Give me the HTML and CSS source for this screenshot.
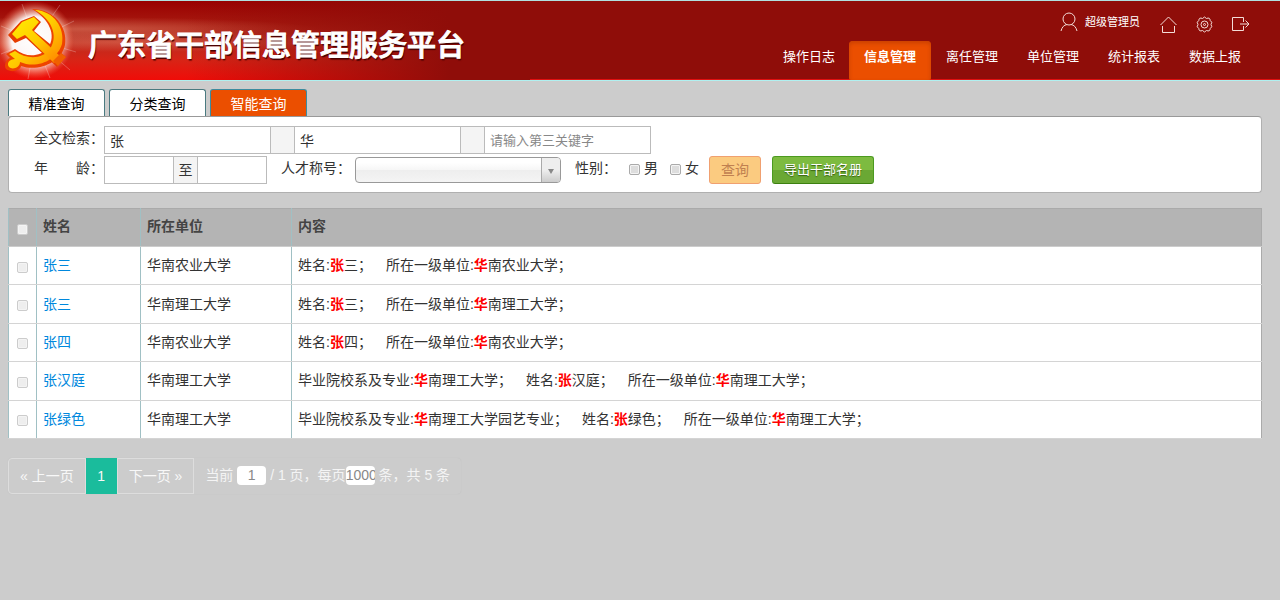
FILE: index.html
```html
<!DOCTYPE html>
<html lang="zh-CN">
<head>
  <meta charset="UTF-8">
  <title>广东省干部信息管理服务平台</title>
  <link rel="stylesheet" href="styles.css">
</head>

<body>
<header class="header">
  <div class="brand">
    <svg class="emblem" width="76" height="78" viewBox="0 0 76 78" aria-hidden="true">
      <defs>
        <radialGradient id="glow">
          <stop offset="0" stop-color="#fff"/>
          <stop offset="0.6" stop-color="#fff" stop-opacity="0.95"/>
          <stop offset="0.8" stop-color="#ffc0a8" stop-opacity="0.5"/>
          <stop offset="1" stop-color="#f64" stop-opacity="0"/>
        </radialGradient>
        <linearGradient id="gold" x1="0" y1="0" x2="1" y2="1">
          <stop offset="0" stop-color="#ffee00"/>
          <stop offset="0.5" stop-color="#ffcc00"/>
          <stop offset="1" stop-color="#ff8000"/>
        </linearGradient>
      </defs>
      <circle cx="35" cy="38" r="39" fill="url(#glow)"/>
      <g stroke="#fff" stroke-opacity="0.25">
        <path d="M35 38L60 3M35 38L74 19M35 38L76 50M35 38L28 77M35 38L50 76M35 38L1 24M35 38L1 52M35 38L22 2M35 38L70 68"/>
      </g>
      <path d="M32 7C54 7 68 25 65 43C61 61 38 70 21 64C20 69 11 71 6 67C3 63 7 57 10 56L6 52L15 47C26 56 40 55 48 46C57 33 49 17 32 7Z" fill="#ee4400"/>
      <path d="M8 33L21 19L34 14L41 20L34 29L66 55L57 65L26 36L15 41Z" fill="#e63c00"/>
      <path d="M35 8C54 9 65 26 62 42C57 59 36 67 20 60C20 66 12 68 9 65C6 61 10 57 15 57L9 52L15 49C27 58 43 57 50 47C59 33 51 17 35 8Z" fill="url(#gold)"/>
      <path d="M12 32L22 20L34 15L39 20L32 28L61 55L54 61L25 33L17 37Z" fill="url(#gold)"/>
      <path d="M53 59L61 51L66 55L58 64Z" fill="#f06000"/>
    </svg>
    <h1 class="title">广东省干部信息管理服务平台</h1>
  </div>
  <div class="header-right">
    <div class="user-bar">
      <svg width="18" height="20" viewBox="0 0 18 20" class="icon"><circle cx="9" cy="7" r="6"/><path d="M1 19C2 15 4 13 7 12.5M11 12.5C14 13 16 15 17 19"/></svg>
      <span class="user-name">超级管理员</span>
      <a href="#" aria-label="首页"><svg width="17" height="17" viewBox="0 0 17 17" class="icon"><path d="M.5 9L8.500 1L16.500 9M2.500 10V16.500H14.500V10"/></svg></a>
      <a href="#" aria-label="设置"><svg width="17" height="17" viewBox="0 0 17 17" class="icon"><path d="M6.500 2.500Q8.500-.5 10.500 2.500Q14 1 14.200 4.500Q17 6 15 8.500Q17 11 14.200 12.500Q14 16 10.500 14.500Q8.500 17.500 6.500 14.500Q3 16 2.800 12.500Q0 11 2 8.500Q0 6 2.800 4.500Q3 1 6.500 2.500Z"/><circle cx="8.500" cy="8.500" r="3.500"/><circle cx="8.500" cy="8.500" r="1"/></svg></a>
      <a href="#" aria-label="退出"><svg width="17" height="17" viewBox="0 0 17 17" class="icon"><path d="M11.500 6V1.500H.5V14.500H11.500V10M8 8H16.500M13.500 4.500L17 8L13.500 11.500"/></svg></a>
    </div>
    <nav class="nav">
      <a href="#">操作日志</a>
      <a href="#" class="active">信息管理</a>
      <a href="#">离任管理</a>
      <a href="#">单位管理</a>
      <a href="#">统计报表</a>
      <a href="#">数据上报</a>
    </nav>
  </div>
</header>

<main class="main">
  <div class="tabs">
    <button type="button">精准查询</button>
    <button type="button">分类查询</button>
    <button type="button" class="active">智能查询</button>
  </div>

  <form class="search">
    <div class="row">
      <label class="name" for="key1">全文检索：</label>
      <div class="group">
        <input type="text" id="key1" class="key" value="张">
        <span class="addon"></span>
        <input type="text" class="key" value="华" aria-label="第二关键字">
        <span class="addon"></span>
        <input type="text" class="key" placeholder="请输入第三关键字" aria-label="第三关键字">
      </div>
    </div>
    <div class="row">
      <label class="name" for="age1">年　　龄：</label>
      <div class="group">
        <input type="text" id="age1" class="age">
        <span class="addon">至</span>
        <input type="text" class="age" aria-label="最大年龄">
      </div>
      <label class="talent-name" for="talent">人才称号：</label>
      <div class="select">
        <select id="talent"><option></option></select>
      </div>
      <span class="sex-name">性别：</span>
      <label class="check"><input type="checkbox">男</label>
      <label class="check"><input type="checkbox">女</label>
      <button type="button" class="btn btn-query">查询</button>
      <button type="button" class="btn btn-export">导出干部名册</button>
    </div>
  </form>

  <table class="list">
    <thead>
      <tr><th class="col-check"><input type="checkbox" aria-label="全选"></th><th class="col-name">姓名</th><th class="col-unit">所在单位</th><th>内容</th></tr>
    </thead>
    <tbody>
      <tr><td class="col-check"><input type="checkbox" aria-label="选择"></td><td><a href="#">张三</a></td><td>华南农业大学</td><td>姓名:<b>张</b>三；　所在一级单位:<b>华</b>南农业大学；</td></tr>
      <tr><td class="col-check"><input type="checkbox" aria-label="选择"></td><td><a href="#">张三</a></td><td>华南理工大学</td><td>姓名:<b>张</b>三；　所在一级单位:<b>华</b>南理工大学；</td></tr>
      <tr><td class="col-check"><input type="checkbox" aria-label="选择"></td><td><a href="#">张四</a></td><td>华南农业大学</td><td>姓名:<b>张</b>四；　所在一级单位:<b>华</b>南农业大学；</td></tr>
      <tr><td class="col-check"><input type="checkbox" aria-label="选择"></td><td><a href="#">张汉庭</a></td><td>华南理工大学</td><td>毕业院校系及专业:<b>华</b>南理工大学；　姓名:<b>张</b>汉庭；　所在一级单位:<b>华</b>南理工大学；</td></tr>
      <tr><td class="col-check"><input type="checkbox" aria-label="选择"></td><td><a href="#">张绿色</a></td><td>华南理工大学</td><td>毕业院校系及专业:<b>华</b>南理工大学园艺专业；　姓名:<b>张</b>绿色；　所在一级单位:<b>华</b>南理工大学；</td></tr>
    </tbody>
  </table>

  <div class="pager">
    <a href="#" class="prev">« 上一页</a>
    <a href="#" class="current">1</a>
    <a href="#" class="next">下一页 »</a>
    <div class="info">当前 <input type="text" value="1" aria-label="当前页"> / 1 页，每页<input type="text" value="1000" aria-label="每页条数"> 条，共 5 条</div>
  </div>
</main>
</body>
</html>
```
FILE: styles.css
```css
* {
  box-sizing: border-box;
}

body {
  margin: 0;
  background: #ccc;
  color: #333;
  font: 14px/20px "Liberation Sans", "Noto Sans CJK SC", sans-serif;
  text-spacing-trim: space-all;
}

input, select, button {
  font: inherit;
  color: inherit;
}

a {
  text-decoration: none;
}

/* header */
.header {
  display: flex;
  justify-content: space-between;
  height: 81px;
  border-top: 1px solid #b0e0e0;
  border-bottom: 1px solid #b0f0f0;
  background: #8f0d09;
  box-shadow: inset 0 -1px #e01010;
}

.brand {
  display: flex;
  align-items: center;
  width: 530px;
  background:
    linear-gradient(90deg, transparent 0, transparent 35%, #8f0d09 85%),
    radial-gradient(ellipse 240px 12px at 80px 28px, rgba(230, 140, 110, 0.5), transparent),
    radial-gradient(ellipse 260px 10px at 130px 41px, rgba(240, 140, 110, 0.4), transparent),
    linear-gradient(#900 0, #a81a10 30%, #b82c20 50%, #d82416 75%, #f00c08 100%);
}

.emblem {
  flex: none;
}

.title {
  margin: 0 0 0 12px;
  padding-top: 10px;
  color: #fff;
  font-size: 29px;
  font-weight: 500;
  line-height: 40px;
  white-space: nowrap;
  text-shadow: 1px 2px 1px #400;
  -webkit-text-stroke: 1px #fff;
}

.header-right {
  display: flex;
  flex-direction: column;
  justify-content: space-between;
  align-items: flex-end;
}

.user-bar {
  display: flex;
  align-items: center;
  height: 39px;
  padding: 3px 31px 0 0;
}

.user-bar a {
  height: 17px;
  margin: 4px 0 0 19px;
}

.user-name {
  margin: 0 1px 0 7px;
  color: #fff;
  font-size: 11px;
}

.icon {
  display: block;
  fill: none;
  stroke: #f4dcd8;
}

.nav {
  display: flex;
  padding-right: 25px;
}

.nav a {
  height: 39px;
  padding: 0 14px 0 15px;
  color: #fff;
  font-size: 13px;
  line-height: 32px;
}

.nav .active {
  padding: 0 15px;
  border-radius: 4px 4px 2px 2px;
  background: #eb4f00;
  box-shadow: inset 0 2px 4px #c84000;
  font-weight: bold;
}

/* tabs and search form */
.main {
  padding: 8px 18px 20px 8px;
}

.tabs {
  display: flex;
  gap: 4px;
}

.tabs button {
  width: 97px;
  height: 27px;
  padding: 2px 0 0;
  border: 1px solid #4a7a80;
  border-bottom: 0;
  border-radius: 3px 3px 0 0;
  background: #fff;
  color: #000;
}

.tabs .active {
  border-color: #3c8ca0;
  background: #eb4f00;
  color: #fff;
}

.search {
  padding: 9px 0 8px 25px;
  border: 1px solid #b0b0b0;
  border-top-color: #999;
  border-radius: 4px;
  background: #fff;
}

.row {
  display: flex;
  align-items: center;
  height: 28px;
}

.row + .row {
  margin-top: 2px;
}

.name {
  width: 70px;
  padding-bottom: 4px;
}

.group {
  display: flex;
  border: 1px solid #bbb;
}

.group input {
  height: 26px;
  padding: 0 5px;
  border: 0;
  background: #fff;
}

.group .key {
  width: 165px;
}

.group .age {
  width: 68px;
}

.group input::placeholder {
  color: #888;
  font-size: 13px;
}

.addon {
  width: 25px;
  border: 1px solid #bbb;
  border-width: 0 1px;
  background: #f4f4f4;
  line-height: 26px;
  text-align: center;
}

.talent-name {
  width: 74px;
  margin-left: 14px;
  padding-bottom: 4px;
}

.select {
  position: relative;
  width: 206px;
  height: 26px;
}

.select select {
  appearance: none;
  width: 100%;
  height: 100%;
  border: 1px solid #999;
  border-radius: 4px;
  background: linear-gradient(#fff 20%, #f6f6f6 50%, #eee 52%, #f4f4f4);
}

.select:after {
  content: '';
  position: absolute;
  top: 1px;
  right: 1px;
  width: 18px;
  height: 24px;
  border-left: 1px solid #aaa;
  border-radius: 0 3px 3px 0;
  background: linear-gradient(#eee 50%, #ccc);
  pointer-events: none;
}

.select:before {
  content: '';
  position: absolute;
  z-index: 1;
  top: 12px;
  right: 7px;
  border: 3px solid transparent;
  border-top: 5px solid #888;
  border-bottom: 0;
  pointer-events: none;
}

.sex-name {
  width: 54px;
  margin-left: 14px;
  padding-bottom: 4px;
}

.check {
  display: flex;
  align-items: center;
  gap: 4px;
  margin-right: 12px;
  padding-bottom: 4px;
}

.check + .btn {
  margin-left: -2px;
}

input[type=checkbox] {
  appearance: none;
  width: 11px;
  height: 11px;
  margin: 0;
  border: 1px solid #aaa;
  border-radius: 2px;
  background: #ddd;
  box-shadow: inset 0 0 0 1px #f4f4f4;
}

.check input {
  margin-top: 2px;
}

.btn {
  height: 28px;
  padding: 0 11px;
  border: 1px solid;
  border-radius: 3px;
}

.btn-query {
  margin-right: 11px;
  border-color: #f0a070;
  background: #fbcb80;
  color: #c08050;
}

.btn-export {
  border-color: #4c9a20;
  border-bottom-color: #3c8010;
  background: linear-gradient(#7dbb40 50%, #6aa834 50%);
  color: #fff;
  font-size: 13px;
  text-shadow: 0 1px 1px #386010;
}

/* result list */
.list {
  width: 100%;
  height: 231px;
  margin-top: 15px;
  border: 1px solid #aaa;
  border-collapse: collapse;
  background: #fff;
}

.list th, .list td {
  height: 38px;
  padding: 0 5px 1px 6px;
  border-left: 1px solid #a0c0c4;
  border-bottom: 1px solid #d4d4d4;
  text-align: left;
}

.list th {
  padding-bottom: 3px;
  border-bottom-color: #ccc;
  background: #b4b4b4;
  color: #444;
}

.list .col-check {
  width: 28px;
  padding: 3px 0 0;
  line-height: 11px;
  text-align: center;
}

.list .col-check input {
  vertical-align: top;
  border-color: #ccc;
  background: #eee;
}

.list .col-name {
  width: 104px;
}

.list .col-unit {
  width: 151px;
}

.list a {
  color: #0088dd;
}

.list b {
  color: #f00;
}

/* pager */
.pager {
  display: inline-flex;
  height: 36px;
  margin-top: 19px;
  border-radius: 4px;
  box-shadow: 0 0 1px #bbb;
  color: #f4f4f4;
  line-height: 34px;
}

.pager a {
  border: 1px solid #ddd;
  color: #f8f8f8;
}

.pager .prev {
  padding: 0 11px;
  border-radius: 4px 0 0 4px;
}

.pager .current {
  width: 31px;
  border-color: #1abc9c;
  background: #1abc9c;
  text-align: center;
}

.pager .next {
  padding: 0 11px;
}

.info {
  padding: 0 11px;
}

.info input {
  width: 29px;
  height: 19px;
  padding: 0;
  border: 0;
  border-radius: 4px;
  background: #fff;
  color: #888;
  text-align: center;
}
```
